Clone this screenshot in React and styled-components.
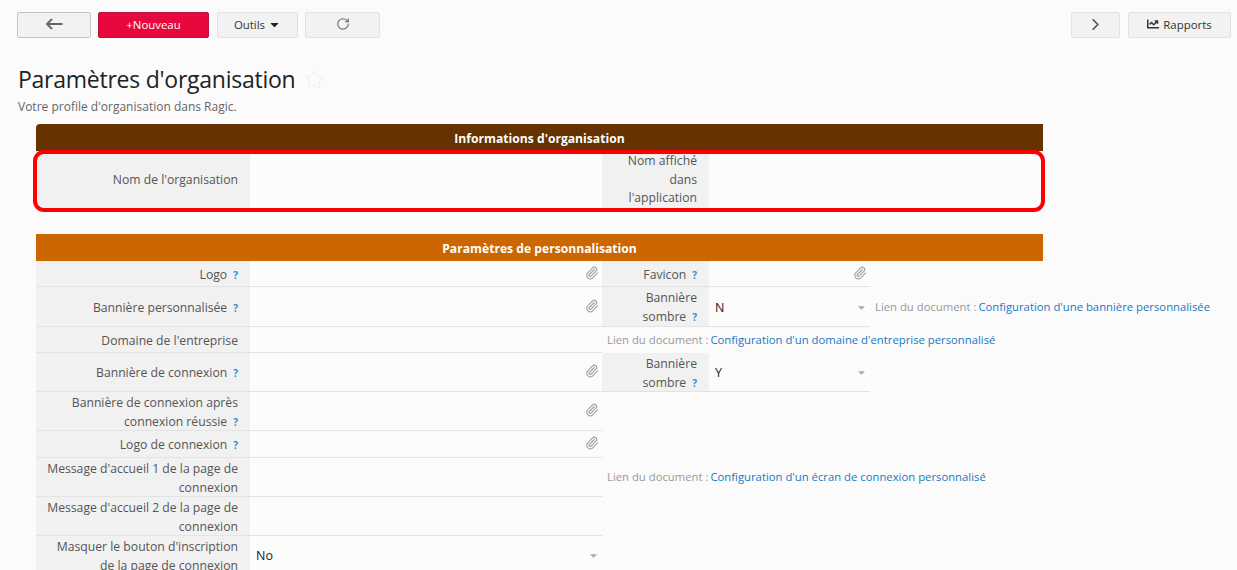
import React from "react";
import styled, { createGlobalStyle } from "styled-components";
import { ChevronRight, Paperclip, RotateCw, Star } from "lucide-react";
import { FaCaretDown, FaChartLine } from "react-icons/fa";

const GlobalStyle = createGlobalStyle`
  html, body {
    margin: 0;
    height: 100%;
    overflow: hidden;
    background: #fbfbfb;
    font-family: "Open Sans", "Liberation Sans", sans-serif;
    font-size: 12.2px;
    color: #555;
  }
`;

const Toolbar = styled.div`
  display: flex;
  gap: 7px;
  padding: 12px 6px 0 17px;
  height: 26px;
`;

const Button = styled.button`
  display: flex;
  align-items: center;
  justify-content: center;
  gap: ${(p) => p.$gap || 4}px;
  width: ${(p) => p.$width}px;
  height: 26px;
  margin: ${(p) => p.$margin || 0};
  padding: 0 0 2px;
  box-sizing: border-box;
  font-family: inherit;
  font-size: 11.4px;
  color: #333;
  background: #f2f2f2;
  border: 1px solid ${(p) => (p.$strong ? "#c4c4c4" : "#e2e2e2")};
  border-radius: 2px;
`;

const NewButton = styled(Button)`
  color: #fff;
  background: #e8083e;
  border-color: #b5153c;
`;

const Spacer = styled.div`
  flex: 1;
`;

const Heading = styled.div`
  display: flex;
  align-items: center;
  gap: 9px;
  margin: 25px 0 0 18px;
  height: 32px;
`;

const Title = styled.h1`
  margin: 0;
  font-size: 23px;
  font-weight: 400;
  letter-spacing: -0.25px;
  color: #222;
`;

const Subtitle = styled.div`
  margin: 3px 0 0 18px;
  height: 18px;
  line-height: 18px;
  font-size: 12px;
  color: #666;
`;

const Sheet = styled.div`
  width: 1007px;
  margin: 8px 0 0 36px;
`;

const SectionHeader = styled.div`
  height: 27px;
  line-height: 29px;
  text-align: center;
  font-size: 12.15px;
  font-weight: 700;
  color: #fff;
  background: ${(p) => p.$color};
  border-top-left-radius: ${(p) => (p.$rounded ? "4px" : "0")};
`;

const FieldGrid = styled.div`
  position: relative;
  display: grid;
  grid-template-columns: 214px 352px 107px 161px 173px;
  grid-template-rows: ${(p) => p.$rows};
  margin-bottom: ${(p) => p.$after || 0}px;
`;

const Highlight = styled.div`
  position: absolute;
  top: -1px;
  left: -3px;
  right: -2px;
  bottom: -3px;
  border: 4px solid #ff0000;
  border-radius: 11px;
`;

const Label = styled.div`
  display: flex;
  align-items: center;
  justify-content: flex-end;
  box-sizing: border-box;
  padding: ${(p) => (p.$plain ? "0 12px" : "1px 12px 0 6px")};
  line-height: ${(p) => (p.$plain ? "18.5px" : "19px")};
  text-align: right;
  background: #f1f1f1;
  border-bottom: ${(p) => (p.$plain ? "0" : "1px solid #e3e3e3")};
`;

const Help = styled.span`
  display: inline-block;
  margin-left: 6px;
  font-size: 10px;
  line-height: 10px;
  font-weight: 700;
  color: #2b8fdc;
`;

const Value = styled.div`
  display: flex;
  align-items: center;
  justify-content: space-between;
  box-sizing: border-box;
  padding: 1px 3px 0 6px;
  grid-column: ${(p) => p.$span || "auto"};
  font-size: 12.5px;
  color: #222;
  background: #fcfcfc;
  border-bottom: ${(p) => (p.$plain ? "0" : "1px solid #e3e3e3")};
`;

const Clip = styled(Paperclip)`
  width: 14px;
  height: 14px;
  margin-top: -3px;
  color: #a3a3a3;
`;

const SelectCaret = styled(FaCaretDown)`
  width: 11px;
  height: 11px;
  color: #aaa;
`;

const DocNote = styled.div`
  display: flex;
  align-items: center;
  padding: 0 0 2px 5px;
  white-space: nowrap;
  font-size: 11.3px;
  color: #999;
  grid-column: ${(p) => p.$span || "auto"};
`;

const DocLink = styled.a`
  margin-left: 2px;
  color: #1878c4;
`;

function HelpText({ children }) {
  return (
    <Label>
      <span>
        {children}
        <Help>?</Help>
      </span>
    </Label>
  );
}

function Note({ span, children }) {
  return (
    <DocNote $span={span}>
      Lien du document :<DocLink>{children}</DocLink>
    </DocNote>
  );
}

function FileValue() {
  return (
    <Value>
      <span />
      <Clip strokeWidth={2} />
    </Value>
  );
}

function SelectValue({ children }) {
  return (
    <Value>
      {children}
      <SelectCaret />
    </Value>
  );
}

function BackArrow() {
  return (
    <svg width="18" height="12" viewBox="0 0 18 12" fill="none" stroke="#666" strokeWidth="1.8">
      <path d="M17.5 6H2M7 1 2 6l5 5" />
    </svg>
  );
}

export default function App() {
  return (
    <>
      <GlobalStyle />
      <Toolbar>
        <Button $width={74} $strong>
          <BackArrow />
        </Button>
        <NewButton $width={111}>+Nouveau</NewButton>
        <Button $width={81} $margin="0 0 0 1px" $gap={3}>
          Outils <FaCaretDown size={13} color="#222" />
        </Button>
        <Button $width={75}>
          <RotateCw size={14} strokeWidth={1.8} color="#666" />
        </Button>
        <Spacer />
        <Button $width={49} $margin="0 1px 0 0">
          <ChevronRight size={19} strokeWidth={2.2} color="#555" />
        </Button>
        <Button $width={103}>
          <FaChartLine size={12} color="#333" /> Rapports
        </Button>
      </Toolbar>

      <Heading>
        <Title>Paramètres d'organisation</Title>
        <Star size={21} strokeWidth={1} color="#ececec" />
      </Heading>
      <Subtitle>Votre profile d'organisation dans Ragic.</Subtitle>

      <Sheet>
        <SectionHeader $color="#663300" $rounded>
          Informations d'organisation
        </SectionHeader>
        <FieldGrid $rows="58px" $after={25}>
          <Label $plain>Nom de l'organisation</Label>
          <Value $plain />
          <Label $plain>Nom affiché dans l'application</Label>
          <Value $plain $span="span 2" />
          <Highlight />
        </FieldGrid>

        <SectionHeader $color="#cc6600">Paramètres de personnalisation</SectionHeader>
        <FieldGrid $rows="26px 40px 26px 39px 39px 27px 39px 39px 39px">
          <HelpText>Logo</HelpText>
          <FileValue />
          <HelpText>Favicon</HelpText>
          <FileValue />
          <div />

          <HelpText>Bannière personnalisée</HelpText>
          <FileValue />
          <HelpText>Bannière sombre</HelpText>
          <SelectValue>N</SelectValue>
          <Note>Configuration d'une bannière personnalisée</Note>

          <Label>Domaine de l'entreprise</Label>
          <Value />
          <Note span="span 3">Configuration d'un domaine d'entreprise personnalisé</Note>

          <HelpText>Bannière de connexion</HelpText>
          <FileValue />
          <HelpText>Bannière sombre</HelpText>
          <SelectValue>Y</SelectValue>
          <div />

          <HelpText>Bannière de connexion après connexion réussie</HelpText>
          <FileValue />
          <DocNote $span="span 3" />

          <HelpText>Logo de connexion</HelpText>
          <FileValue />
          <DocNote $span="span 3" />

          <Label>Message d'accueil 1 de la page de connexion</Label>
          <Value />
          <Note span="span 3">Configuration d'un écran de connexion personnalisé</Note>

          <Label>Message d'accueil 2 de la page de connexion</Label>
          <Value />
          <DocNote $span="span 3" />

          <Label>Masquer le bouton d'inscription de la page de connexion</Label>
          <SelectValue>No</SelectValue>
          <DocNote $span="span 3" />
        </FieldGrid>
      </Sheet>
    </>
  );
}
